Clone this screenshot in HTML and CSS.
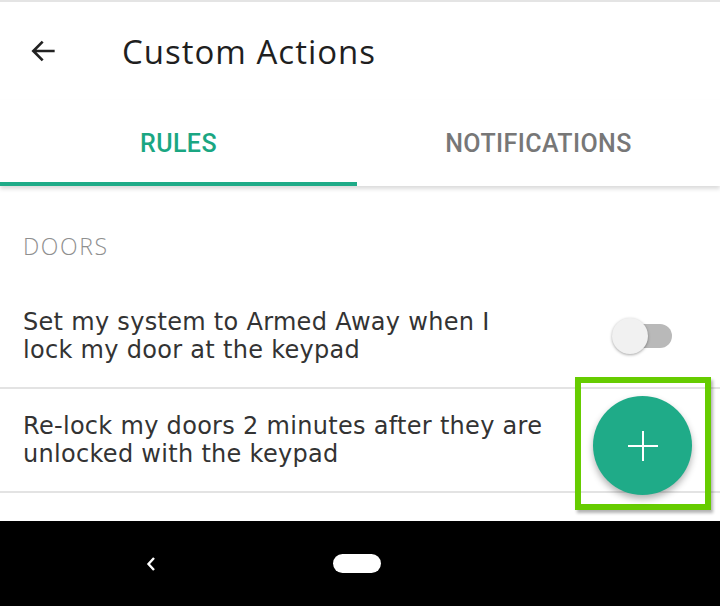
FILE: index.html
```html
<!DOCTYPE html>
<html lang="en">
<head>
    <meta charset="UTF-8">
    <meta name="viewport" content="width=device-width, initial-scale=1.0">
    <title>Custom Actions</title>
    <link rel="stylesheet" href="styles.css">
</head>
<body>
<div class="screen">
    <!-- top bar -->
    <header class="toolbar">
        <svg class="back" width="32" height="32" viewBox="0 0 24 24">
            <path d="M20 12H4.5M11 5l-7 7 7 7" fill="none" stroke="#222" stroke-width="2"/>
        </svg>
        <h1>Custom Actions</h1>
    </header>

    <!-- tabs -->
    <nav class="tabs">
        <div class="tab active">RULES</div>
        <div class="tab">NOTIFICATIONS</div>
    </nav>

    <main class="list">
        <div class="section-title">DOORS</div>
        <div class="row">
            <p>Set my system to Armed Away when I<br>lock my door at the keypad</p>
            <span class="toggle"><span class="thumb"></span></span>
        </div>
        <div class="row">
            <p>Re-lock my doors 2 minutes after they are<br>unlocked with the keypad</p>
        </div>
        <div class="row"></div>
    </main>

    <!-- android nav -->
    <footer class="navbar">
        <svg width="14" height="20" viewBox="0 0 14 20">
            <path d="M10 4L4.5 10l5.5 6" fill="none" stroke="#fff" stroke-width="2.4"/>
        </svg>
        <span class="home"></span>
    </footer>

    <!-- highlighted add button -->
    <div class="highlight"></div>
    <button class="fab">
        <svg width="32" height="32" viewBox="0 0 32 32">
            <path d="M16 1v30M1 16h30" stroke="#fff" stroke-width="2"/>
        </svg>
    </button>
</div>
</body>
</html>
```

FILE: styles.css
```css
body {
    margin: 0;
    font-family: "Open Sans", "Liberation Sans", sans-serif;
    background: #fff;
}
.screen {
    position: relative;
    width: 720px;
    height: 606px;
    overflow: hidden;
    display: flex;
    flex-direction: column;
    border-top: 2px solid #e4e4e4;
    box-sizing: border-box;
}
.toolbar {
    height: 98px;
    display: flex;
    align-items: center;
    padding-left: 28px;
    gap: 62px;
    flex-shrink: 0;
}
.toolbar h1 {
    margin: 0;
    font-weight: 400;
    font-size: 33px;
    color: #1f1f1f;
    letter-spacing: 1px;
}
.tabs {
    height: 86px;
    display: flex;
    box-shadow: 0 3px 4px rgba(0, 0, 0, 0.14);
    position: relative;
    z-index: 1;
    flex-shrink: 0;
}
.tab {
    flex: 1;
    display: flex;
    align-items: center;
    justify-content: center;
    font-family: Roboto, sans-serif;
    font-weight: 500;
    font-size: 25px;
    letter-spacing: 0.4px;
    color: #777;
    padding-top: 4px;
    box-sizing: border-box;
    border-bottom: 4px solid transparent;
}
.tab.active {
    color: #1aa682;
    border-bottom-color: #1fab88;
    flex: 0 0 357px;
}
.list {
    flex: 1;
    overflow: hidden;
}
.section-title {
    height: 99px;
    padding: 44px 0 0 23px;
    box-sizing: border-box;
    font-size: 23px;
    font-weight: 300;
    letter-spacing: 1.6px;
    color: #8f8f8f;
}
.row {
    height: 102px;
    display: flex;
    align-items: center;
    justify-content: space-between;
    padding: 0 48px 0 23px;
    border-bottom: 2px solid #e3e3e3;
}
.row p {
    margin: 0;
    font-family: "DejaVu Sans", sans-serif;
    font-size: 24px;
    line-height: 28px;
    letter-spacing: 0.3px;
    color: #333;
}
.toggle {
    position: relative;
    width: 56px;
    height: 24px;
    border-radius: 12px;
    background: #b9b9b9;
}
.thumb {
    position: absolute;
    left: -4px;
    top: -6px;
    width: 36px;
    height: 36px;
    border-radius: 50%;
    background: #f1f1f1;
    box-shadow: 0 1px 3px rgba(0, 0, 0, 0.35);
}
.navbar {
    height: 85px;
    background: #000;
    display: flex;
    align-items: center;
    padding-left: 144px;
    gap: 175px;
    flex-shrink: 0;
}
.home {
    width: 48px;
    height: 19px;
    border-radius: 10px;
    background: #fff;
}
/* green highlight box over the add button */
.highlight {
    position: absolute;
    left: 575px;
    top: 375px;
    width: 124px;
    height: 121px;
    border: 6px solid #66cc00;
    box-shadow: 2px 3px 3px rgba(0, 0, 0, 0.3);
}
.fab {
    position: absolute;
    left: 593px;
    top: 394px;
    width: 99px;
    height: 99px;
    border: none;
    border-radius: 50%;
    background: #1fab88;
    box-shadow: 0 4px 7px rgba(0, 0, 0, 0.3);
    display: flex;
    align-items: center;
    justify-content: center;
    padding: 0;
}
```
